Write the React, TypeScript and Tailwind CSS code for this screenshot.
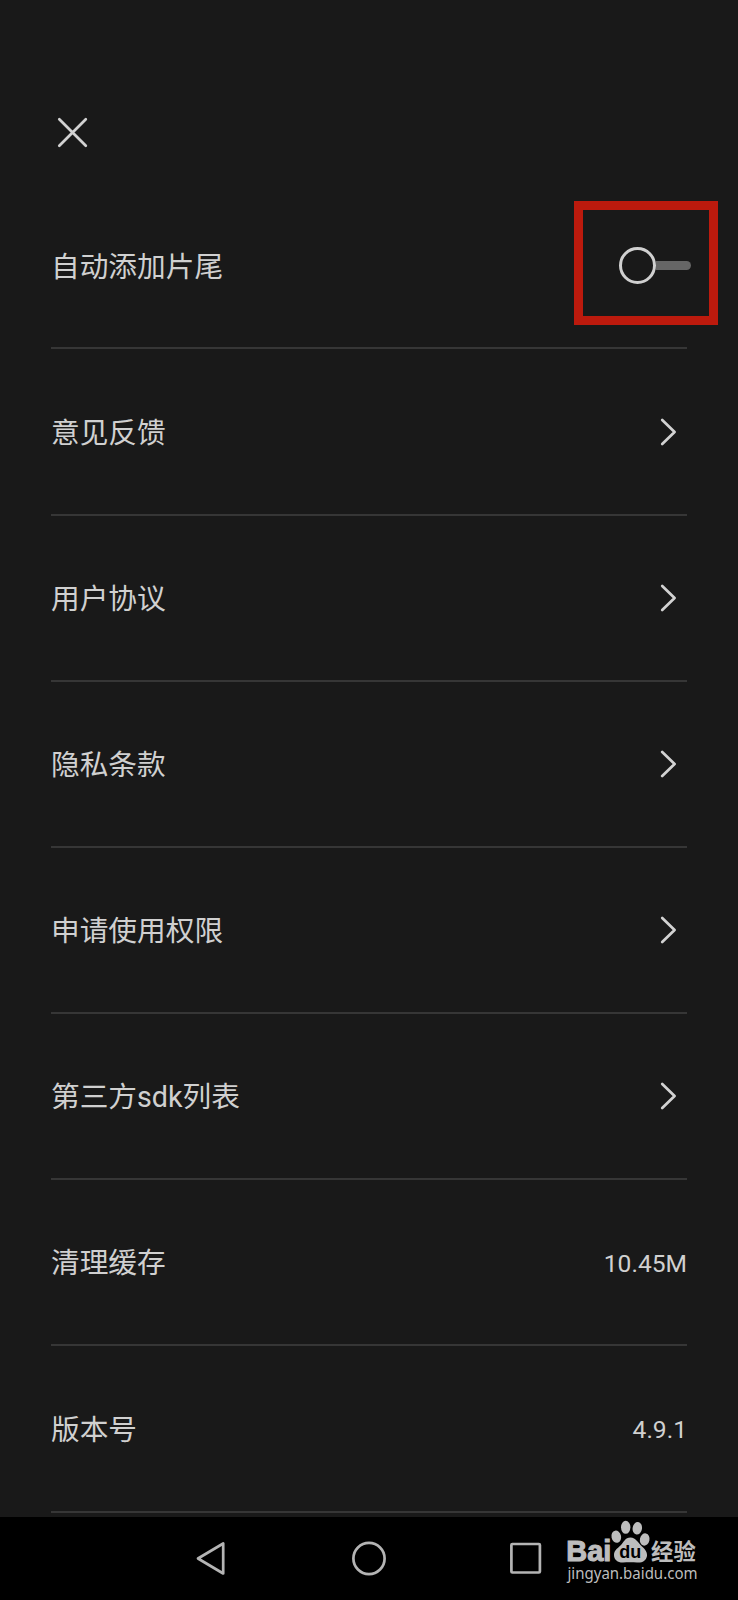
import { useState } from 'react';

interface SettingItem {
  label: string;
  kind: 'switch' | 'link' | 'value';
  value?: string;
}

const items: SettingItem[] = [
  { label: '自动添加片尾', kind: 'switch' },
  { label: '意见反馈', kind: 'link' },
  { label: '用户协议', kind: 'link' },
  { label: '隐私条款', kind: 'link' },
  { label: '申请使用权限', kind: 'link' },
  { label: '第三方sdk列表', kind: 'link' },
  { label: '清理缓存', kind: 'value', value: '10.45M' },
  { label: '版本号', kind: 'value', value: '4.9.1' },
];

const ChevronIcon = () => (
  <svg
    className="mr-2.5"
    width="18"
    height="28"
    viewBox="0 0 18 28"
    fill="none"
    stroke="#d2d2d2"
    strokeWidth="2.7"
    strokeLinecap="round"
    strokeLinejoin="round"
  >
    <path d="M3.200 2L15.600 14L3.200 26" />
  </svg>
);

const Switch = () => {
  const [on, setOn] = useState(false);

  return (
    <button
      className={`relative -mr-1 flex h-[38px] w-[72px] items-center ${on ? 'flex-row-reverse' : ''}`}
      role="switch"
      aria-checked={on}
      onClick={() => setOn(!on)}
    >
      <span className="h-[37px] w-[37px] shrink-0 rounded-full border-[3px] border-[#d0d0d0]" />
      <span className="h-[9px] flex-1 rounded-r-full bg-[#666666]" />
      <span className="pointer-events-none absolute -top-[45px] -left-[45px] h-[124px] w-[144px] border-[9px] border-[#bc1a0d]" />
    </button>
  );
};

const SettingRow = ({ item }: { item: SettingItem }) => (
  <li className="flex h-[166.17px] items-center justify-between border-b-2 border-[#363636]">
    <span className="pt-[3px] text-[28.7px] leading-none">{item.label}</span>
    {item.kind === 'switch' && <Switch />}
    {item.kind === 'link' && <ChevronIcon />}
    {item.kind === 'value' && (
      <span className="pt-1 text-[24.6px] leading-none">{item.value}</span>
    )}
  </li>
);

const Watermark = () => (
  <svg
    className="absolute top-0 left-[560px]"
    width="150"
    height="83"
    viewBox="0 0 150 83"
    fill="#bdbdbd"
  >
    <text
      x="6.3"
      y="44.3"
      fontFamily="Liberation Sans, Arial, sans-serif"
      fontWeight="700"
      fontSize="29"
      textLength="45"
      lengthAdjust="spacingAndGlyphs"
      stroke="#bdbdbd"
      strokeWidth="1.1"
    >
      Bai
    </text>
    <ellipse cx="56.3" cy="19.7" rx="4.8" ry="6.2" transform="rotate(-12 56.3 19.7)" />
    <ellipse cx="65.7" cy="10.3" rx="4.7" ry="6.5" />
    <ellipse cx="77.3" cy="11.3" rx="4.7" ry="6.3" transform="rotate(8 77.3 11.3)" />
    <ellipse cx="84.7" cy="22.5" rx="4.8" ry="6.2" transform="rotate(12 84.7 22.5)" />
    <path d="M70.5 20.5C76 20.5 78 26 82 29.5C86 33 87.3 36 87 39C86 44 82 46 77 45.5C73 45 67 45 63 45.5C58 45.7 54 43 54 38C54 33 58 31 61 28C64 25 65 20.5 70.5 20.5Z" />
    <text
      x="59.3"
      y="41.3"
      fill="#000"
      fontFamily="Liberation Sans, Arial, sans-serif"
      fontWeight="700"
      fontSize="19"
      textLength="22"
      lengthAdjust="spacingAndGlyphs"
    >
      du
    </text>
    <text
      x="91"
      y="42.5"
      fontFamily="Noto Sans CJK SC, sans-serif"
      fontWeight="700"
      fontSize="22.4"
      textLength="45"
    >
      经验
    </text>
    <text
      x="7.5"
      y="62"
      fontFamily="Noto Sans, sans-serif"
      fontSize="15.8"
      textLength="130"
      lengthAdjust="spacingAndGlyphs"
    >
      jingyan.baidu.com
    </text>
  </svg>
);

const NavBar = () => (
  <nav className="relative flex h-[83px] items-center justify-between bg-black pr-[196px] pl-[195px]">
    <svg width="32" height="38" viewBox="0 0 32 38" fill="none" stroke="#b4b4b4" strokeWidth="2.7" strokeLinejoin="round">
      <path d="M3 18.5L28.2 3.5V33.5Z" />
    </svg>
    <svg width="38" height="38" viewBox="0 0 38 38" fill="none" stroke="#b4b4b4" strokeWidth="2.7">
      <circle cx="19" cy="18.5" r="15.6" />
    </svg>
    <svg width="32" height="38" viewBox="0 0 32 38" fill="none" stroke="#b4b4b4" strokeWidth="2.7">
      <rect x="1.4" y="4" width="28.5" height="28.5" rx="1" />
    </svg>
    <Watermark />
  </nav>
);

const App = () => {
  return (
    <div className="flex h-[1600px] w-[738px] flex-col overflow-hidden bg-[#191919] font-['Roboto','Noto_Sans_CJK_SC',sans-serif] text-[#d0d0d0]">
      <header className="h-[183.3px] shrink-0 px-[57px] pt-[117px]">
        <button className="block" aria-label="关闭">
          <svg width="32" height="32" viewBox="0 0 32 32" stroke="#d2d2d2" strokeWidth="2.7" strokeLinecap="round">
            <path d="M2.3 2.3L28.8 28.8M28.8 2.3L2.3 28.8" />
          </svg>
        </button>
      </header>
      <ul className="flex-1 px-[51px]">
        {items.map((item) => (
          <SettingRow key={item.label} item={item} />
        ))}
      </ul>
      <NavBar />
    </div>
  );
};

export default App;
